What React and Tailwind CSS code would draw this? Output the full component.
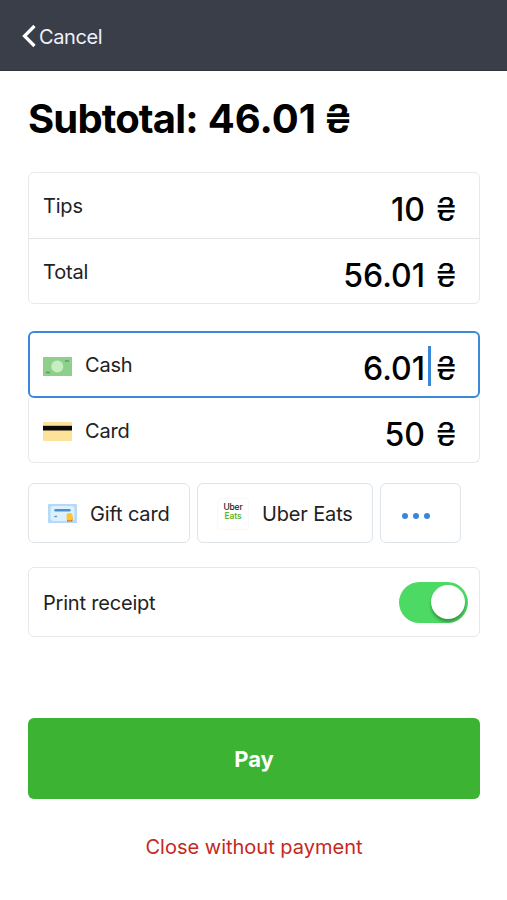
import clsx from 'clsx'

function BanknoteIcon() {
  return (
    <svg width="29" height="19" viewBox="0 0 29 19" fill="none" className="mt-0.5 shrink-0">
      <rect width="29" height="19" rx="0.5" fill="#8fcf8c" />
      <circle cx="14.3" cy="9.5" r="6" fill="#c5efc0" />
      <path d="M22 4h4M3 15.5h4" stroke="#5d9d61" strokeWidth="1.3" />
    </svg>
  )
}

function CardIcon() {
  return (
    <svg width="29" height="19" viewBox="0 0 29 19" fill="none" className="mt-0.5 shrink-0">
      <rect width="29" height="19" rx="1" fill="#fde29a" />
      <path d="M0 3.8h29v4.7H0z" fill="#0a0a0a" />
    </svg>
  )
}

function GiftCardIcon() {
  return (
    <svg width="29" height="19" viewBox="0 0 29 19" fill="none" className="shrink-0">
      <rect width="29" height="19" rx="0.5" fill="#b5daf9" />
      <path d="M4.5 2h20l2 2v11l-2 2h-20l-2-2v-11z" fill="#dcf0fd" />
      <path d="M7.5 6.2h14" stroke="#4d8fce" strokeWidth="2.4" strokeLinecap="round" />
      <path d="M7 12.5h1.5" stroke="#6f96bd" strokeWidth="1.6" strokeLinecap="round" />
      <path d="M19 13h5.5v4.5h-5.5z" fill="#e0602f" />
      <rect x="18.6" y="9" width="6" height="7.4" rx="2.6" fill="#fbc62b" />
    </svg>
  )
}

function UberEatsLogo() {
  return (
    <div className="flex h-8 w-8 shrink-0 flex-col items-center justify-center rounded-sm border border-[#f8f8f8] pb-[3px] text-[8.5px]">
      <span className="h-[9px] font-medium leading-[9px] text-[#222]">Uber</span>
      <span className="h-[9px] font-semibold leading-[9px] text-[#5fb52e]">Eats</span>
    </div>
  )
}

function AmountRow({ label, amount, icon, active, className }) {
  return (
    <div className={clsx('flex items-center justify-between', className)}>
      <div className="flex items-center pt-px">
        {icon}
        <span className={clsx('text-xl tracking-[-0.2px] text-[#222]', icon && 'ml-[13px]')}>{label}</span>
      </div>
      <div className="flex items-center pt-[9px] text-[32px] font-medium leading-10 text-black">
        <span>{amount}</span>
        {active ? <span className="mb-1.5 ml-[3px] mr-[5px] h-10 w-[3px] bg-[#3a86d8]" /> : <span className="w-[11px]" />}
        <span className="w-5 text-center text-[32px] font-normal">₴</span>
      </div>
    </div>
  )
}

function MethodButton({ children, className }) {
  return (
    <button
      className={clsx(
        'flex h-[60px] items-center rounded-md border border-[#dfe4e8] pt-px text-xl tracking-[-0.15px] text-[#222]',
        className
      )}
    >
      {children}
    </button>
  )
}

export default function App() {
  return (
    <div className="h-[900px] w-[507px] overflow-hidden bg-white font-['Inter',sans-serif]">
      <header className="flex h-[71px] items-center border-b border-[#30333d] bg-[#3a3e49] pl-[22px]">
        <button className="flex items-center gap-[2px] pt-[3px] text-xl tracking-[-0.4px] text-[#eef0fa]">
          <svg width="15" height="24" viewBox="0 0 15 24" fill="none" className="mb-px">
            <path d="M12.5 2L2.5 12l10 10" stroke="white" strokeWidth="3.2" />
          </svg>
          Cancel
        </button>
      </header>

      <main className="flex flex-col pl-7 pr-[27px]">
        <h1 className="mt-[23px] flex h-[50px] items-center text-[40px] font-bold text-black">
          <span className="tracking-[-0.85px]">Subtotal:</span>
          <span className="ml-[10px]">46.01</span>
          <span className="ml-2 font-semibold">₴</span>
        </h1>

        <section className="mt-7 rounded-md border border-[#e6e9eb]">
          <AmountRow label="Tips" amount="10" className="h-[66px] border-b border-[#e2e5e8] pl-3.5 pr-[23px]" />
          <AmountRow label="Total" amount="56.01" className="h-[64px] pl-3.5 pr-[23px]" />
        </section>

        <section className="mt-[27px]">
          <AmountRow
            label="Cash"
            amount="6.01"
            icon={<BanknoteIcon />}
            active
            className="h-[67px] rounded-md border-2 border-[#3c89da] pl-[13px] pr-[22px]"
          />
          <AmountRow
            label="Card"
            amount="50"
            icon={<CardIcon />}
            className="h-[65px] rounded-b-md border border-t-0 border-[#e6e9eb] pl-3.5 pr-[23px]"
          />
        </section>

        <section className="mt-5 flex gap-[7px]">
          <MethodButton className="w-[162px] pl-[19px]">
            <GiftCardIcon />
            <span className="ml-[13px]">Gift card</span>
          </MethodButton>
          <MethodButton className="w-[176px] pl-[19px]">
            <UberEatsLogo />
            <span className="ml-[13px]">Uber Eats</span>
          </MethodButton>
          <MethodButton className="w-[81px] gap-[5px] pl-[21px]">
            <span className="mt-1 size-1.5 rounded-full bg-[#3a86d8]" />
            <span className="mt-1 size-1.5 rounded-full bg-[#3a86d8]" />
            <span className="mt-1 size-1.5 rounded-full bg-[#3a86d8]" />
          </MethodButton>
        </section>

        <section className="mt-6 flex h-[70px] items-center justify-between rounded-md border border-[#e6e9eb] pl-3.5 pr-[11px]">
          <span className="pt-0.5 text-xl tracking-[-0.2px] text-[#222]">Print receipt</span>
          <div className="flex h-[41px] w-[69px] items-center justify-end rounded-full bg-[#4cd964] pr-[3px]">
            <div className="mb-px size-[34px] rounded-full bg-white shadow-[0_3px_3px_rgba(0,0,0,0.3)]" />
          </div>
        </section>

        <button className="mt-[81px] h-[81px] rounded-md bg-[#3cb332] pt-0.5 text-[22px] font-bold text-white">
          Pay
        </button>
        <button className="mt-8 h-8 text-xl text-[#c5281f]">Close without payment</button>
      </main>
    </div>
  )
}
